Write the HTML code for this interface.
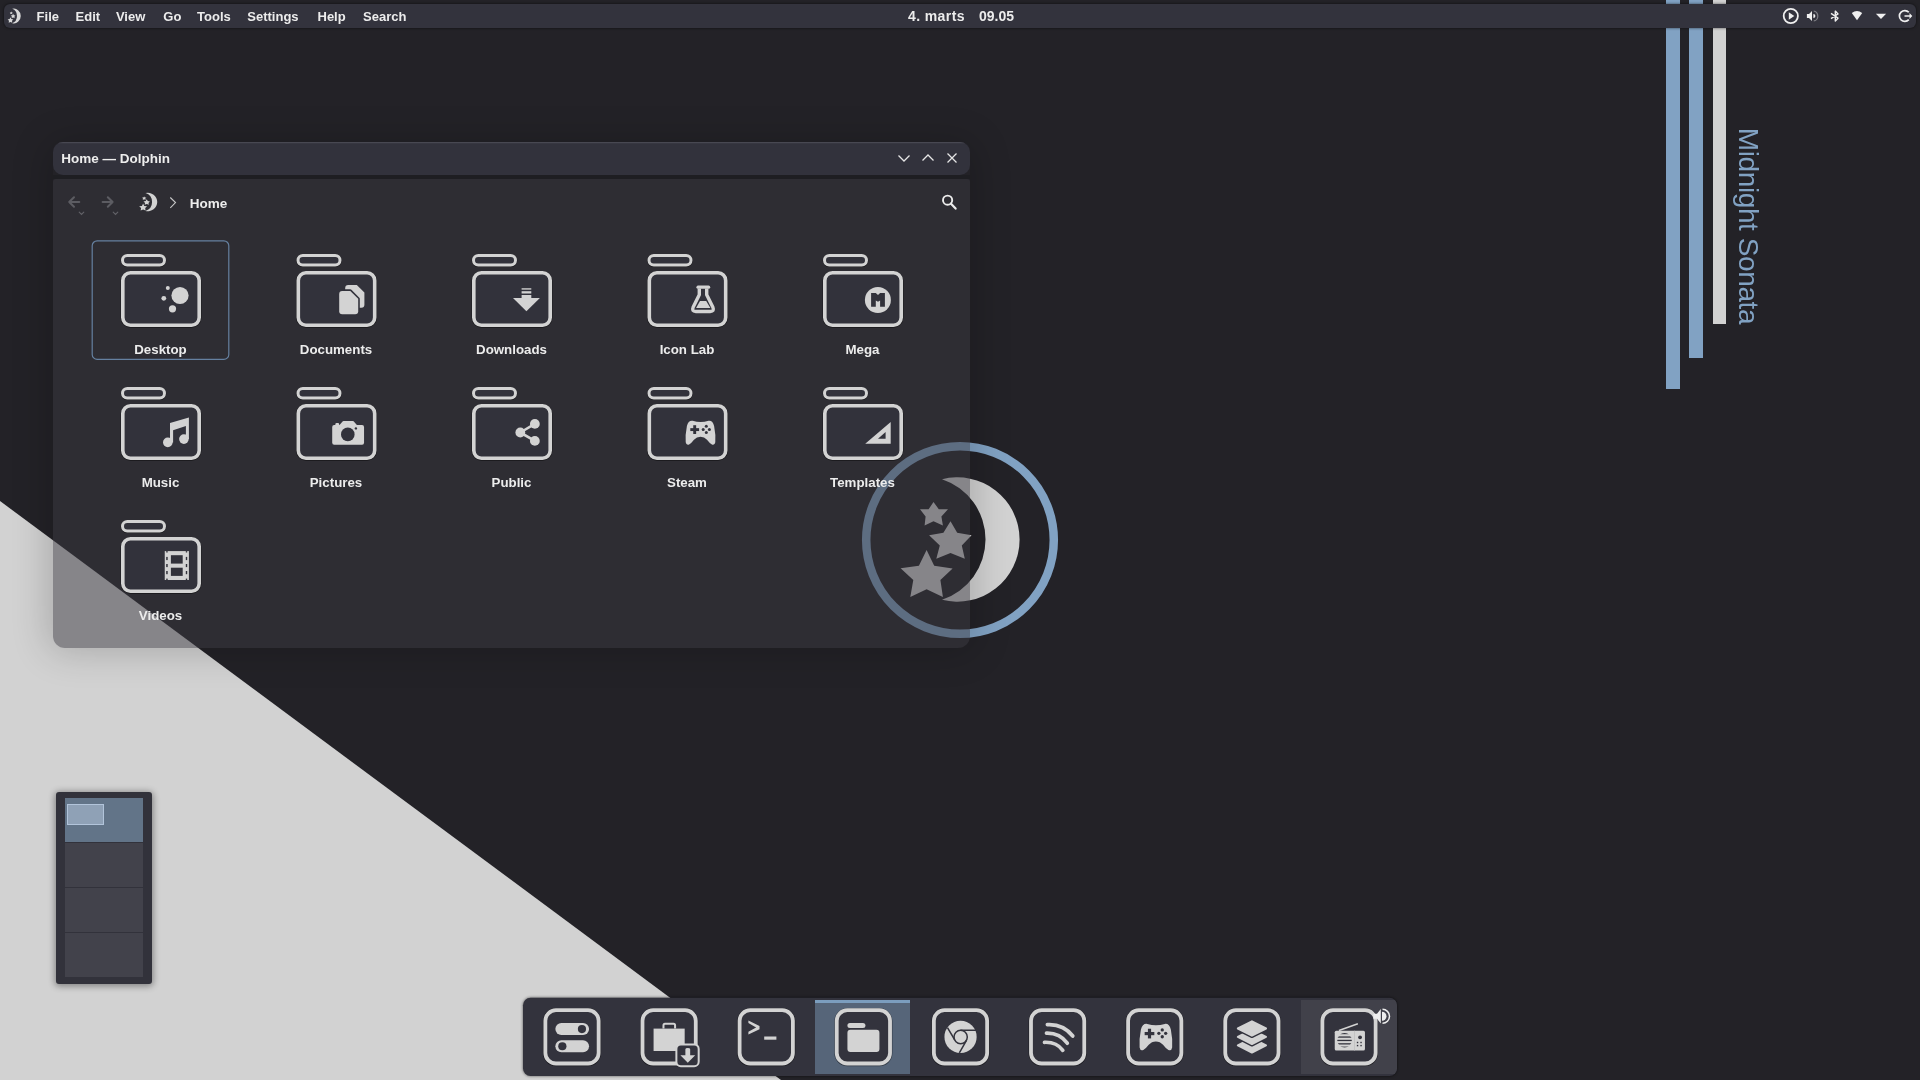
<!DOCTYPE html><html><head><meta charset="utf-8"><style>
html,body{margin:0;padding:0;width:1920px;height:1080px;overflow:hidden;background:#232227;}
svg{display:block;position:absolute;left:0;top:0;will-change:transform;}
text{font-family:"Liberation Sans",sans-serif;}
</style></head><body>
<svg width="1920" height="1080" viewBox="0 0 1920 1080">
<defs>
<filter id="winsh" x="-10%" y="-10%" width="120%" height="130%"><feGaussianBlur stdDeviation="19"/></filter>
<filter id="sh2" x="-5%" y="-60%" width="110%" height="220%"><feGaussianBlur stdDeviation="1.5"/></filter>
<filter id="sh1" x="-20%" y="-20%" width="140%" height="140%"><feGaussianBlur stdDeviation="0.7"/></filter>
<g id="moon"><path d="M942,479.3 A62.15,62.15 0 1 1 942,599.7 A63.4,63.4 0 0 0 942,479.3 Z"/><path d="M933.5,502.1 L938.8,509.3 L948.0,509.3 L941.4,516.4 L942.9,525.6 L933.5,521.3 L924.6,525.6 L925.6,516.4 L920.0,509.3 L928.6,509.3 Z M950.5,521.3 L957.2,532.7 L971.6,535.3 L961.8,545.4 L964.8,558.7 L950.5,553.1 L936.3,558.7 L939.8,545.4 L929.1,535.3 L943.4,532.7 Z M926.6,550.0 L934.2,565.8 L952.6,568.4 L940.4,580.1 L942.9,596.9 L926.6,589.3 L910.3,596.9 L913.3,580.1 L900.6,568.2 L918.9,565.8 Z"/></g>
</defs>
<rect x="0" y="0" width="1920" height="1080" fill="#232227"/>
<polygon points="0,501 781,1080 0,1080" fill="#d2d2d2"/>
<rect x="1666" y="0" width="14" height="389" fill="#81a2c3"/>
<rect x="1689" y="0" width="14" height="358" fill="#81a2c3"/>
<rect x="1713" y="0" width="13" height="324" fill="#d2d2d2"/>
<text transform="translate(1738.7,127.8) rotate(90)" font-size="28" letter-spacing="-0.4" fill="#81a2c3">Midnight Sonata</text>
<circle cx="960" cy="540" r="93.8" fill="none" stroke="#81a2c3" stroke-width="8.5"/>
<g fill="#d2d2d2"><use href="#moon"/></g>
<mask id="winmask" maskUnits="userSpaceOnUse" x="0" y="0" width="1920" height="1080"><rect x="0" y="0" width="1920" height="1080" fill="#fff"/><path d="M53,152 Q53,142 63,142 L960,142 Q970,142 970,152 L970,636 A12,12 0 0 1 958,648 L65,648 A12,12 0 0 1 53,636 Z" fill="#000"/></mask>
<g mask="url(#winmask)"><rect x="49" y="143" width="925" height="508" rx="12" fill="#000" opacity="0.2" filter="url(#winsh)"/></g>
<clipPath id="tbclip"><rect x="53" y="142" width="917" height="33" rx="10"/></clipPath>
<rect x="53" y="142" width="917" height="33" rx="10" fill="#32323c"/>
<rect x="53" y="142" width="917" height="1.3" fill="#484852" clip-path="url(#tbclip)"/>
<rect x="53" y="175" width="917" height="4" fill="#1e1e22"/>
<text x="61.3" y="163.3" font-size="13.5" font-weight="bold" fill="#ededed">Home — Dolphin</text>
<g stroke="#e6e6e6" stroke-width="1.3" fill="none"><polyline points="898.5,155.5 904,161 909.5,155.5"/><polyline points="922.5,160.5 928,155 933.5,160.5"/><path d="M947.5,153.5 L956.5,162.5 M956.5,153.5 L947.5,162.5"/></g>
<path d="M53,182 Q53,179 56,179 L967,179 Q970,179 970,182 L970,636 A12,12 0 0 1 958,648 L65,648 A12,12 0 0 1 53,636 Z" fill="rgba(57,55,63,0.5)"/>
<g stroke="#5c5c62" stroke-width="2" fill="none" stroke-linecap="round" stroke-linejoin="round"><path d="M69.2,202 L79.3,202 M74,197.2 L69.2,202 L74,206.8"/><path d="M112.6,202 L102.6,202 M107.8,197.2 L112.6,202 L107.8,206.8"/></g>
<g stroke="#626268" stroke-width="1.1" fill="none" stroke-linecap="round"><polyline points="79.2,212.2 81.5,214.5 83.8,212.2"/><polyline points="113.2,212.2 115.5,214.5 117.8,212.2"/></g>
<g fill="#d2d2d2" transform="translate(2.26,122.16) scale(0.152,0.148)"><use href="#moon"/></g>
<polyline points="170.3,197.5 175.5,202.6 170.3,207.8" stroke="#c8c8c8" stroke-width="1.1" fill="none"/>
<text x="189.7" y="208.3" font-size="13.5" font-weight="bold" fill="#ededed">Home</text>
<g stroke="#ececec" fill="none"><circle cx="947.6" cy="200.2" r="4.6" stroke-width="1.9"/><path d="M950.8,203.6 L955.6,208.6" stroke-width="2.2" stroke-linecap="round"/></g>
<rect x="92.2" y="240.8" width="136.6" height="118.6" rx="5" fill="none" stroke="#6580a0" stroke-width="1.2"/>
<g filter="url(#sh1)" opacity="0.5"><rect x="122.5" y="255.8" width="42" height="9.5" rx="4.75" fill="none" stroke="#000" stroke-width="3.6"/><rect x="122.8" y="273.1" width="76.4" height="52.4" rx="7.6" fill="none" stroke="#000" stroke-width="4.4"/></g><rect x="122.5" y="255.5" width="42" height="9.5" rx="4.75" fill="#32323b" stroke="#d3d3d3" stroke-width="3"/><rect x="122.8" y="272.8" width="76.4" height="52.4" rx="7.6" fill="#32323b" stroke="#d3d3d3" stroke-width="3.6"/><g fill="#d3d3d3" transform="translate(121.0,271.0)"><circle cx="59" cy="24.5" r="8.6"/><circle cx="46.8" cy="17" r="2"/><circle cx="42.8" cy="27.3" r="2.4"/><circle cx="51.5" cy="37.8" r="3.6"/></g>
<text x="160.5" y="354.3" font-size="13.3" font-weight="bold" fill="#ececec" text-anchor="middle">Desktop</text>
<g filter="url(#sh1)" opacity="0.5"><rect x="298.0" y="255.8" width="42" height="9.5" rx="4.75" fill="none" stroke="#000" stroke-width="3.6"/><rect x="298.3" y="273.1" width="76.4" height="52.4" rx="7.6" fill="none" stroke="#000" stroke-width="4.4"/></g><rect x="298.0" y="255.5" width="42" height="9.5" rx="4.75" fill="#32323b" stroke="#d3d3d3" stroke-width="3"/><rect x="298.3" y="272.8" width="76.4" height="52.4" rx="7.6" fill="#32323b" stroke="#d3d3d3" stroke-width="3.6"/><g fill="#d3d3d3" transform="translate(296.5,271.0)"><path d="M51.7,13.9 L60.3,13.9 L67.9,21.5 L67.9,33.8 Q67.9,36.8 64.9,36.8 L51.7,36.8 Q48.7,36.8 48.7,33.8 L48.7,16.9 Q48.7,13.9 51.7,13.9 Z"/><path d="M45.7,19.9 L53.8,19.9 L61.7,27.8 L61.7,40.2 Q61.7,43.2 58.7,43.2 L45.7,43.2 Q42.7,43.2 42.7,40.2 L42.7,22.9 Q42.7,19.9 45.7,19.9 Z" fill="#32323b" stroke="#32323b" stroke-width="3.2" stroke-linejoin="round"/><path d="M45.7,19.9 L53.8,19.9 L61.7,27.8 L61.7,40.2 Q61.7,43.2 58.7,43.2 L45.7,43.2 Q42.7,43.2 42.7,40.2 L42.7,22.9 Q42.7,19.9 45.7,19.9 Z"/></g>
<text x="336.0" y="354.3" font-size="13.3" font-weight="bold" fill="#ececec" text-anchor="middle">Documents</text>
<g filter="url(#sh1)" opacity="0.5"><rect x="473.5" y="255.8" width="42" height="9.5" rx="4.75" fill="none" stroke="#000" stroke-width="3.6"/><rect x="473.8" y="273.1" width="76.4" height="52.4" rx="7.6" fill="none" stroke="#000" stroke-width="4.4"/></g><rect x="473.5" y="255.5" width="42" height="9.5" rx="4.75" fill="#32323b" stroke="#d3d3d3" stroke-width="3"/><rect x="473.8" y="272.8" width="76.4" height="52.4" rx="7.6" fill="#32323b" stroke="#d3d3d3" stroke-width="3.6"/><g fill="#d3d3d3" transform="translate(472.0,271.0)"><path d="M41,27 L67.9,27 L54.4,40.3 Z"/><rect x="49.6" y="24" width="9.7" height="3.2"/><rect x="49.6" y="20.2" width="9.7" height="2.3"/><rect x="49.6" y="17" width="9.7" height="1.8" opacity="0.75"/></g>
<text x="511.5" y="354.3" font-size="13.3" font-weight="bold" fill="#ececec" text-anchor="middle">Downloads</text>
<g filter="url(#sh1)" opacity="0.5"><rect x="649.0" y="255.8" width="42" height="9.5" rx="4.75" fill="none" stroke="#000" stroke-width="3.6"/><rect x="649.3" y="273.1" width="76.4" height="52.4" rx="7.6" fill="none" stroke="#000" stroke-width="4.4"/></g><rect x="649.0" y="255.5" width="42" height="9.5" rx="4.75" fill="#32323b" stroke="#d3d3d3" stroke-width="3"/><rect x="649.3" y="272.8" width="76.4" height="52.4" rx="7.6" fill="#32323b" stroke="#d3d3d3" stroke-width="3.6"/><g fill="#d3d3d3" transform="translate(647.5,271.0)"><rect x="48.9" y="14.6" width="13.8" height="3.2" rx="1.6"/><path d="M51.8,17.5 L51.8,23.8 L45.6,36.3 Q43.9,40.5 48.3,40.5 L62.7,40.5 Q67.1,40.5 65.4,36.3 L59.2,23.8 L59.2,17.5" fill="none" stroke="#d3d3d3" stroke-width="3.4" stroke-linejoin="round"/><path d="M52.5,30.1 L58.7,30.1 L62.9,36.9 L48.6,36.9 Z"/></g>
<text x="687.0" y="354.3" font-size="13.3" font-weight="bold" fill="#ececec" text-anchor="middle">Icon Lab</text>
<g filter="url(#sh1)" opacity="0.5"><rect x="824.5" y="255.8" width="42" height="9.5" rx="4.75" fill="none" stroke="#000" stroke-width="3.6"/><rect x="824.8" y="273.1" width="76.4" height="52.4" rx="7.6" fill="none" stroke="#000" stroke-width="4.4"/></g><rect x="824.5" y="255.5" width="42" height="9.5" rx="4.75" fill="#32323b" stroke="#d3d3d3" stroke-width="3"/><rect x="824.8" y="272.8" width="76.4" height="52.4" rx="7.6" fill="#32323b" stroke="#d3d3d3" stroke-width="3.6"/><g fill="#d3d3d3" transform="translate(823.0,271.0)"><circle cx="54.9" cy="29" r="13"/><path d="M48.1,21.9 L52.8,21.9 L55,24 L57.1,21.9 L61.9,21.9 L61.9,35.8 L57.1,35.8 L57.1,29.6 L55,30.8 L52.8,29.6 L52.8,35.8 L48.1,35.8 Z" fill="#32323b"/></g>
<text x="862.5" y="354.3" font-size="13.3" font-weight="bold" fill="#ececec" text-anchor="middle">Mega</text>
<g filter="url(#sh1)" opacity="0.5"><rect x="122.5" y="388.8" width="42" height="9.5" rx="4.75" fill="none" stroke="#000" stroke-width="3.6"/><rect x="122.8" y="406.1" width="76.4" height="52.4" rx="7.6" fill="none" stroke="#000" stroke-width="4.4"/></g><rect x="122.5" y="388.5" width="42" height="9.5" rx="4.75" fill="#32323b" stroke="#d3d3d3" stroke-width="3"/><rect x="122.8" y="405.8" width="76.4" height="52.4" rx="7.6" fill="#32323b" stroke="#d3d3d3" stroke-width="3.6"/><g fill="#d3d3d3" transform="translate(121.0,404.0)"><circle cx="46.8" cy="38.4" r="4.8"/><circle cx="62.9" cy="35.1" r="4.8"/><path d="M49,19.1 L67.9,13.4 L67.9,35.1 L64.9,35.1 L64.9,22 L52.1,26.3 L52.1,38.4 L49,38.4 Z"/></g>
<text x="160.5" y="487.3" font-size="13.3" font-weight="bold" fill="#ececec" text-anchor="middle">Music</text>
<g filter="url(#sh1)" opacity="0.5"><rect x="298.0" y="388.8" width="42" height="9.5" rx="4.75" fill="none" stroke="#000" stroke-width="3.6"/><rect x="298.3" y="406.1" width="76.4" height="52.4" rx="7.6" fill="none" stroke="#000" stroke-width="4.4"/></g><rect x="298.0" y="388.5" width="42" height="9.5" rx="4.75" fill="#32323b" stroke="#d3d3d3" stroke-width="3"/><rect x="298.3" y="405.8" width="76.4" height="52.4" rx="7.6" fill="#32323b" stroke="#d3d3d3" stroke-width="3.6"/><g fill="#d3d3d3" transform="translate(296.5,404.0)"><rect x="35.7" y="21.1" width="31.85" height="19.7" rx="2"/><path d="M42.6,21.6 L46.3,17.2 Q46.6,16.9 47.2,16.9 L56.2,16.9 Q56.8,16.9 57.1,17.2 L60.8,21.6 Z"/><rect x="38.8" y="19.1" width="3.9" height="3" rx="1.4"/><circle cx="51.3" cy="30.4" r="6.8" fill="#32323b"/><circle cx="59.4" cy="24.4" r="1.2" fill="#32323b"/></g>
<text x="336.0" y="487.3" font-size="13.3" font-weight="bold" fill="#ececec" text-anchor="middle">Pictures</text>
<g filter="url(#sh1)" opacity="0.5"><rect x="473.5" y="388.8" width="42" height="9.5" rx="4.75" fill="none" stroke="#000" stroke-width="3.6"/><rect x="473.8" y="406.1" width="76.4" height="52.4" rx="7.6" fill="none" stroke="#000" stroke-width="4.4"/></g><rect x="473.5" y="388.5" width="42" height="9.5" rx="4.75" fill="#32323b" stroke="#d3d3d3" stroke-width="3"/><rect x="473.8" y="405.8" width="76.4" height="52.4" rx="7.6" fill="#32323b" stroke="#d3d3d3" stroke-width="3.6"/><g fill="#d3d3d3" transform="translate(472.0,404.0)"><circle cx="62.85" cy="19.9" r="4.9"/><circle cx="62.85" cy="36.9" r="4.9"/><circle cx="48.3" cy="28.5" r="4.9"/><path d="M48.3,28.5 L62.85,19.9 M48.3,28.5 L62.85,36.9" stroke="#d3d3d3" stroke-width="2.6"/></g>
<text x="511.5" y="487.3" font-size="13.3" font-weight="bold" fill="#ececec" text-anchor="middle">Public</text>
<g filter="url(#sh1)" opacity="0.5"><rect x="649.0" y="388.8" width="42" height="9.5" rx="4.75" fill="none" stroke="#000" stroke-width="3.6"/><rect x="649.3" y="406.1" width="76.4" height="52.4" rx="7.6" fill="none" stroke="#000" stroke-width="4.4"/></g><rect x="649.0" y="388.5" width="42" height="9.5" rx="4.75" fill="#32323b" stroke="#d3d3d3" stroke-width="3"/><rect x="649.3" y="405.8" width="76.4" height="52.4" rx="7.6" fill="#32323b" stroke="#d3d3d3" stroke-width="3.6"/><g fill="#d3d3d3" transform="translate(647.5,404.0)"><path d="M45.2,16.8 Q53,19.3 61.1,16.8 Q65.2,16.2 66.6,22 Q68.4,31 67.8,38.3 Q67.3,41.5 64.4,40.5 Q62.3,39.5 59.5,35.8 Q56.8,32.7 53,32.7 Q49.2,32.7 46.5,35.8 Q43.7,39.5 41.6,40.5 Q38.7,41.5 38.2,38.3 Q37.6,31 39.4,22 Q40.8,16.2 45.2,16.8 Z"/><g fill="#32323b"><rect x="42.8" y="24.15" width="8.8" height="2.9"/><rect x="45.75" y="21.2" width="2.9" height="8.8"/><circle cx="58.8" cy="22.3" r="1.5"/><circle cx="58.8" cy="28.5" r="1.5"/><circle cx="55.7" cy="25.4" r="1.5"/><circle cx="61.9" cy="25.4" r="1.5"/></g></g>
<text x="687.0" y="487.3" font-size="13.3" font-weight="bold" fill="#ececec" text-anchor="middle">Steam</text>
<g filter="url(#sh1)" opacity="0.5"><rect x="824.5" y="388.8" width="42" height="9.5" rx="4.75" fill="none" stroke="#000" stroke-width="3.6"/><rect x="824.8" y="406.1" width="76.4" height="52.4" rx="7.6" fill="none" stroke="#000" stroke-width="4.4"/></g><rect x="824.5" y="388.5" width="42" height="9.5" rx="4.75" fill="#32323b" stroke="#d3d3d3" stroke-width="3"/><rect x="824.8" y="405.8" width="76.4" height="52.4" rx="7.6" fill="#32323b" stroke="#d3d3d3" stroke-width="3.6"/><g fill="#d3d3d3" transform="translate(823.0,404.0)"><path d="M42.2,39.7 L67.7,17.9 L67.7,39.7 Z M55,34.7 L62.6,34.7 L62.6,27.9 Z" fill-rule="evenodd"/></g>
<text x="862.5" y="487.3" font-size="13.3" font-weight="bold" fill="#ececec" text-anchor="middle">Templates</text>
<g filter="url(#sh1)" opacity="0.5"><rect x="122.5" y="521.8" width="42" height="9.5" rx="4.75" fill="none" stroke="#000" stroke-width="3.6"/><rect x="122.8" y="539.1" width="76.4" height="52.4" rx="7.6" fill="none" stroke="#000" stroke-width="4.4"/></g><rect x="122.5" y="521.5" width="42" height="9.5" rx="4.75" fill="#32323b" stroke="#d3d3d3" stroke-width="3"/><rect x="122.8" y="538.8" width="76.4" height="52.4" rx="7.6" fill="#32323b" stroke="#d3d3d3" stroke-width="3.6"/><g fill="#d3d3d3" transform="translate(121.0,537.0)"><rect x="43.75" y="14.1" width="24.15" height="28.9"/><g fill="#32323b"><rect x="49.9" y="18.2" width="11.8" height="8.4"/><rect x="49.9" y="30.7" width="11.8" height="8.2"/><rect x="45.2" y="14.1" width="1.5" height="1.4"/><rect x="64.8" y="14.1" width="1.4" height="1.4"/><rect x="45.2" y="19.9" width="1.5" height="3.2"/><rect x="64.8" y="19.9" width="1.4" height="3.2"/><rect x="45.2" y="27.0" width="1.5" height="3.1"/><rect x="64.8" y="27.0" width="1.4" height="3.1"/><rect x="45.2" y="34.0" width="1.5" height="3.2"/><rect x="64.8" y="34.0" width="1.4" height="3.2"/><rect x="45.2" y="41.6" width="1.5" height="1.4"/><rect x="64.8" y="41.6" width="1.4" height="1.4"/></g></g>
<text x="160.5" y="620.3" font-size="13.3" font-weight="bold" fill="#ececec" text-anchor="middle">Videos</text>
<rect x="4" y="4" width="1912" height="24" rx="6" fill="#000" opacity="0.6" filter="url(#sh2)"/>
<rect x="4" y="4" width="1912" height="24" rx="6" fill="#33333d"/>
<g fill="#d8d8d8" transform="translate(-92.006,-48.039) scale(0.1106,0.1187)"><use href="#moon"/></g>
<text x="36.6" y="21" font-size="13" font-weight="bold" fill="#ececec">File</text>
<text x="75.6" y="21" font-size="13" font-weight="bold" fill="#ececec">Edit</text>
<text x="115.9" y="21" font-size="13" font-weight="bold" fill="#ececec">View</text>
<text x="163.3" y="21" font-size="13" font-weight="bold" fill="#ececec">Go</text>
<text x="197.1" y="21" font-size="13" font-weight="bold" fill="#ececec">Tools</text>
<text x="247.3" y="21" font-size="13" font-weight="bold" fill="#ececec">Settings</text>
<text x="317.5" y="21" font-size="13" font-weight="bold" fill="#ececec">Help</text>
<text x="363.0" y="21" font-size="13" font-weight="bold" fill="#ececec">Search</text>
<text x="908" y="21" font-size="14" font-weight="bold" fill="#ececec" letter-spacing="0.4">4. marts</text>
<text x="979" y="21" font-size="14" font-weight="bold" fill="#ececec">09.05</text>
<g fill="#efefef" stroke="none">
<circle cx="1790.8" cy="16" r="7.1" fill="none" stroke="#efefef" stroke-width="1.8"/>
<path d="M1788.8,12.3 L1794.3,16 L1788.8,19.7 Z"/>
<path d="M1806.9,14.1 L1809,14.1 L1812,11.1 L1812,20.9 L1809,17.9 L1806.9,17.9 Z"/>
<path d="M1813.4,14 A2,2.05 0 0 1 1813.4,18.1 Z"/>
<path d="M1813.8,11.1 A4,4.9 0 0 1 1813.8,20.9" fill="none" stroke="#7d7d83" stroke-width="1.25"/>
<path d="M1831,13.4 L1838,18.2 L1835.3,20.9 L1835.3,11.1 L1838,13.9 L1831,18.6" fill="none" stroke="#efefef" stroke-width="1.4" stroke-linejoin="round"/>
<path d="M1851.8,13 Q1857,9 1862.2,13 L1857,20.3 Z"/>
<path d="M1875.9,13.8 L1886.1,13.8 L1881,19.1 Z"/>
<path d="M1908.8,12.3 A5.4,5.4 0 1 0 1908.8,19.6" fill="none" stroke="#efefef" stroke-width="1.7"/>
<path d="M1904.5,15.2 L1909.5,15.2 L1909.5,13 L1912.3,16 L1909.5,19 L1909.5,16.8 L1904.5,16.8 Z"/>
</g>
<filter id="sh3" x="-30%" y="-30%" width="160%" height="160%"><feGaussianBlur stdDeviation="3.5"/></filter>
<rect x="55" y="792" width="98" height="194" rx="4" fill="#000" opacity="0.4" filter="url(#sh3)"/>
<rect x="56" y="792" width="96" height="192" rx="3" fill="#32323b"/>
<rect x="65" y="798" width="78" height="44" fill="#627488"/>
<rect x="65" y="843" width="78" height="44" fill="#42424b"/>
<rect x="65" y="888" width="78" height="44" fill="#42424b"/>
<rect x="65" y="933" width="78" height="44" fill="#42424b"/>
<rect x="67.5" y="804.5" width="36" height="20" fill="#8fa1b6" stroke="#b2c4da" stroke-width="1"/>
<clipPath id="dockclip"><rect x="523" y="997.8" width="874" height="78.2" rx="7.5"/></clipPath>
<rect x="523" y="997.8" width="874" height="78.2" rx="7.5" fill="#000" opacity="0.6" filter="url(#sh2)"/>
<rect x="523" y="997.8" width="874" height="78.2" rx="7.5" fill="#33333d"/>
<g clip-path="url(#dockclip)"><rect x="1301" y="1000" width="100" height="74" fill="#41414a"/></g>
<rect x="815" y="1000" width="95" height="74" fill="#566579"/>
<rect x="815" y="1000" width="95" height="3" fill="#7b9dbe"/>
<rect x="545.35" y="1010.50" width="53.3" height="53.3" rx="10.6" fill="none" stroke="#000" stroke-width="4.8" opacity="0.45" filter="url(#sh1)"/><rect x="545.35" y="1010.20" width="53.3" height="53.3" rx="10.6" fill="#33333d" stroke="#d3d3d3" stroke-width="3.8"/><g fill="#d3d3d3" transform="translate(543.45,1008.30)"><rect x="11.9" y="14.7" width="33.7" height="12.1" rx="6.05"/><rect x="11.9" y="31.9" width="33.7" height="12.1" rx="6.05"/><circle cx="38.5" cy="20.75" r="4.1" fill="#33333d"/><circle cx="18.9" cy="37.95" r="4.1" fill="#33333d"/></g>
<rect x="642.48" y="1010.50" width="53.3" height="53.3" rx="10.6" fill="none" stroke="#000" stroke-width="4.8" opacity="0.45" filter="url(#sh1)"/><rect x="642.48" y="1010.20" width="53.3" height="53.3" rx="10.6" fill="#33333d" stroke="#d3d3d3" stroke-width="3.8"/><g fill="#d3d3d3" transform="translate(640.58,1008.30)"><rect x="13" y="20.3" width="31.1" height="22.4"/><path d="M22.9,20.3 L22.9,17 Q22.9,15.5 24.4,15.5 L33,15.5 Q34.5,15.5 34.5,17 L34.5,20.3" fill="none" stroke="#d3d3d3" stroke-width="2"/><rect x="35.8" y="36.2" width="22.3" height="21.7" rx="4.5" fill="#33333d" stroke="#d3d3d3" stroke-width="2"/><path d="M44.8,41 Q44.8,39.6 47.2,39.6 Q49.6,39.6 49.6,41 L49.6,47 L54.6,47 L47.2,54.4 L39.8,47 L44.8,47 Z"/></g>
<rect x="739.60" y="1010.50" width="53.3" height="53.3" rx="10.6" fill="none" stroke="#000" stroke-width="4.8" opacity="0.45" filter="url(#sh1)"/><rect x="739.60" y="1010.20" width="53.3" height="53.3" rx="10.6" fill="#33333d" stroke="#d3d3d3" stroke-width="3.8"/><g fill="#d3d3d3" transform="translate(737.70,1008.30)"><path d="M10.7,12.1 L21.8,17.6 L21.8,20.9 L10.7,26.2 L10.7,23.5 L18.4,19.25 L10.7,14.8 Z"/><rect x="26.5" y="28.2" width="12.2" height="3.2"/></g>
<rect x="836.73" y="1010.50" width="53.3" height="53.3" rx="10.6" fill="none" stroke="#000" stroke-width="4.8" opacity="0.45" filter="url(#sh1)"/><rect x="836.73" y="1010.20" width="53.3" height="53.3" rx="10.6" fill="#33333d" stroke="#d3d3d3" stroke-width="3.8"/><g fill="#d3d3d3" transform="translate(834.83,1008.30)"><rect x="12.6" y="14.7" width="18" height="5" rx="2.5"/><rect x="12.6" y="21.4" width="32" height="22.4" rx="3"/></g>
<rect x="933.85" y="1010.50" width="53.3" height="53.3" rx="10.6" fill="none" stroke="#000" stroke-width="4.8" opacity="0.45" filter="url(#sh1)"/><rect x="933.85" y="1010.20" width="53.3" height="53.3" rx="10.6" fill="#33333d" stroke="#d3d3d3" stroke-width="3.8"/><g fill="#d3d3d3" transform="translate(931.95,1008.30)"><circle cx="28.6" cy="28.6" r="16.1"/><g fill="none" stroke="#33333d" stroke-width="1.5"><circle cx="28.7" cy="28.7" r="6.65"/><path d="M28.6,21.95 L44.6,21.95 M15.5,19.4 L22.6,31.2 M34.4,32.4 L27.4,44.6"/></g></g>
<rect x="1030.98" y="1010.50" width="53.3" height="53.3" rx="10.6" fill="none" stroke="#000" stroke-width="4.8" opacity="0.45" filter="url(#sh1)"/><rect x="1030.98" y="1010.20" width="53.3" height="53.3" rx="10.6" fill="#33333d" stroke="#d3d3d3" stroke-width="3.8"/><g fill="#d3d3d3" transform="translate(1029.08,1008.30)"><g fill="none" stroke="#d3d3d3" stroke-width="3.7" stroke-linecap="round"><path d="M18.3,16.4 Q34,15.5 43.7,27.7"/><path d="M17.4,24.9 Q30.5,24.5 38.2,34.9"/><path d="M15.4,34 Q27.5,33.5 33.7,42"/></g></g>
<rect x="1128.10" y="1010.50" width="53.3" height="53.3" rx="10.6" fill="none" stroke="#000" stroke-width="4.8" opacity="0.45" filter="url(#sh1)"/><rect x="1128.10" y="1010.20" width="53.3" height="53.3" rx="10.6" fill="#33333d" stroke="#d3d3d3" stroke-width="3.8"/><g fill="#d3d3d3" transform="translate(1126.20,1008.30)"><g transform="translate(13.4,15.6) scale(1.1) translate(-38.2,-16.8)"><path d="M45.2,16.8 Q53,19.3 61.1,16.8 Q65.2,16.2 66.6,22 Q68.4,31 67.8,38.3 Q67.3,41.5 64.4,40.5 Q62.3,39.5 59.5,35.8 Q56.8,32.7 53,32.7 Q49.2,32.7 46.5,35.8 Q43.7,39.5 41.6,40.5 Q38.7,41.5 38.2,38.3 Q37.6,31 39.4,22 Q40.8,16.2 45.2,16.8 Z"/><g fill="#33333d"><rect x="42.8" y="24.15" width="8.8" height="2.9"/><rect x="45.75" y="21.2" width="2.9" height="8.8"/><circle cx="58.8" cy="22.3" r="1.5"/><circle cx="58.8" cy="28.5" r="1.5"/><circle cx="55.7" cy="25.4" r="1.5"/><circle cx="61.9" cy="25.4" r="1.5"/></g></g></g>
<rect x="1225.23" y="1010.50" width="53.3" height="53.3" rx="10.6" fill="none" stroke="#000" stroke-width="4.8" opacity="0.45" filter="url(#sh1)"/><rect x="1225.23" y="1010.20" width="53.3" height="53.3" rx="10.6" fill="#33333d" stroke="#d3d3d3" stroke-width="3.8"/><g fill="#d3d3d3" transform="translate(1223.33,1008.30)"><path d="M28.6,29.90 L42.7,37.10 L28.6,44.30 L14.5,37.10 Z" stroke-linejoin="round" stroke="#d3d3d3" stroke-width="2"/><path d="M28.6,21.40 L42.7,28.60 L28.6,35.80 L14.5,28.60 Z" stroke-linejoin="round" stroke="#33333d" stroke-width="4.8"/><path d="M28.6,21.40 L42.7,28.60 L28.6,35.80 L14.5,28.60 Z" stroke-linejoin="round" stroke="#d3d3d3" stroke-width="2"/><path d="M28.6,13.00 L42.7,20.20 L28.6,27.40 L14.5,20.20 Z" stroke-linejoin="round" stroke="#33333d" stroke-width="4.8"/><path d="M28.6,13.00 L42.7,20.20 L28.6,27.40 L14.5,20.20 Z" stroke-linejoin="round" stroke="#d3d3d3" stroke-width="2"/></g>
<rect x="1322.35" y="1010.50" width="53.3" height="53.3" rx="10.6" fill="none" stroke="#000" stroke-width="4.8" opacity="0.45" filter="url(#sh1)"/><rect x="1322.35" y="1010.20" width="53.3" height="53.3" rx="10.6" fill="#33333d" stroke="#d3d3d3" stroke-width="3.8"/><g fill="#d3d3d3" transform="translate(1320.45,1008.30)"><rect x="14.3" y="22.4" width="30.2" height="19.8" rx="1.5"/><path d="M18.5,22.2 L37.4,15.4" stroke="#d3d3d3" stroke-width="1.5"/><clipPath id="spk"><circle cx="24.1" cy="32" r="7.2"/></clipPath><g fill="#33333d" clip-path="url(#spk)"><rect x="15" y="24.6" width="18" height="1.3"/><rect x="15" y="28.1" width="18" height="1.3"/><rect x="15" y="31.5" width="18" height="1.3"/><rect x="15" y="34.9" width="18" height="1.3"/><rect x="15" y="38.3" width="18" height="1.3"/></g><rect x="33.7" y="22.4" width="0.7" height="19.8" fill="#bdbdbd"/><g fill="#33333d"><circle cx="39.6" cy="29" r="1.9"/><rect x="36.4" y="33.5" width="1.4" height="1.4"/><rect x="39.9" y="33.5" width="1.4" height="1.4"/><rect x="36.4" y="36.6" width="1.4" height="1.4"/><rect x="39.9" y="36.6" width="1.4" height="1.4"/></g></g>
<g fill="#efefef" transform="translate(-1,0.3)"><path d="M1374.4,1013.5 L1378,1013.5 L1381.8,1008.6 L1381.8,1023.3 L1378,1018.5 L1374.4,1018.5 Z"/><path d="M1383,1011.5 A4.5,4.5 0 0 1 1383,1020.5 Z"/><path d="M1383.5,1009 A7,7 0 0 1 1383.5,1023" fill="none" stroke="#efefef" stroke-width="1.5"/></g>
</svg></body></html>
